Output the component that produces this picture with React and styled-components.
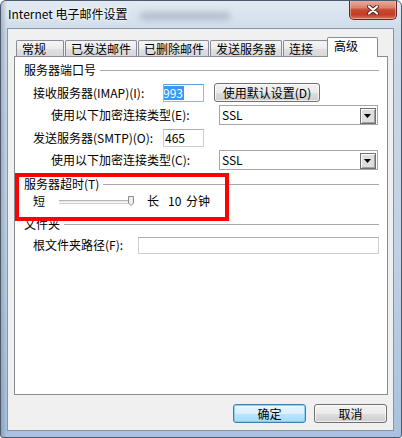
import styled, { createGlobalStyle } from 'styled-components';

const GlobalStyle = createGlobalStyle`
  html, body {
    margin: 0;
    padding: 0;
  }
  body {
    width: 402px;
    height: 438px;
    overflow: hidden;
    font-family: "Noto Sans CJK SC", "Liberation Sans", sans-serif;
    font-size: 12px;
    color: #000;
  }
  * {
    box-sizing: border-box;
  }
`;

const tabs = [
  { label: '常规', width: 48 },
  { label: '已发送邮件', width: 72 },
  { label: '已删除邮件', width: 71 },
  { label: '发送服务器', width: 72 },
  { label: '连接', width: 45 },
  { label: '高级', width: 51, active: true },
];

function CloseIcon() {
  return (
    <svg width="12" height="10" viewBox="0 0 12 10">
      <path d="M2 1.5 L10 8.5 M10 1.5 L2 8.5" stroke="#5b1f16" strokeWidth="4" strokeLinecap="round" />
      <path d="M2 1.5 L10 8.5 M10 1.5 L2 8.5" stroke="#fff" strokeWidth="2.2" strokeLinecap="round" />
    </svg>
  );
}

function Combo({ value }) {
  return (
    <Select>
      <SelectText>{value}</SelectText>
      <ArrowButton>
        <svg width="8" height="5" viewBox="0 0 8 5">
          <polygon points="0,0 7,0 3.5,4" fill="#000" />
        </svg>
      </ArrowButton>
    </Select>
  );
}

function Group({ title, top }) {
  return (
    <GroupHeader $top={top}>
      <span>{title}</span>
    </GroupHeader>
  );
}

export default function App() {
  return (
    <>
      <GlobalStyle />
      <Window>
        <TitleBar>
          <Title>Internet 电子邮件设置</Title>
          <GlassBlur />
          <CloseButton>
            <CloseIcon />
          </CloseButton>
        </TitleBar>
        <Client>
          <TabStrip>
            {tabs.map((t) => (
              <Tab key={t.label} $width={t.width} $active={t.active}>
                {t.label}
              </Tab>
            ))}
          </TabStrip>
          <Panel>
            <Group title="服务器端口号" top={6} />
            <Row $top={6} $height={19} $indent={9}>
              <Label $width={130}>接收服务器(IMAP)(I):</Label>
              <TextBox $width={41} $height={18} $focused>
                <Selected>993</Selected>
              </TextBox>
              <Button $width={106} $height={19} style={{ marginLeft: 10 }}>
                使用默认设置(D)
              </Button>
            </Row>
            <Row $top={3} $height={20} $indent={27}>
              <Label $width={168}>使用以下加密连接类型(E):</Label>
              <Combo value="SSL" />
            </Row>
            <Row $top={4} $height={18} $indent={9}>
              <Label $width={130}>发送服务器(SMTP)(O):</Label>
              <TextBox $width={41} $height={18}>465</TextBox>
            </Row>
            <Row $top={3} $height={20} $indent={27}>
              <Label $width={168}>使用以下加密连接类型(C):</Label>
              <Combo value="SSL" />
            </Row>

            <Group title="服务器超时(T)" top={7} />
            <Row $top={2} $height={16} $indent={9}>
              <Label $width={26}>短</Label>
              <Track>
                <Thumb>
                  <svg width="6" height="10" viewBox="0 0 6 10">
                    <path d="M0.5 0.5 H5.5 V7 L3 9.5 L0.5 7 Z" fill="#eeeeee" stroke="#8c8c8c" />
                  </svg>
                </Thumb>
              </Track>
              <Label $width={21} style={{ marginLeft: 14 }}>长</Label>
              <Label $width={18}>10</Label>
              <Label>分钟</Label>
            </Row>

            <Group title="文件夹" top={8} />
            <Row $top={5} $height={18} $indent={9}>
              <Label $width={105}>根文件夹路径(F):</Label>
              <TextBox $width={241} $height={17} />
            </Row>

            <Highlight />
          </Panel>
          <ButtonRow>
            <Button $width={73} $height={19} $default>确定</Button>
            <Button $width={73} $height={19}>取消</Button>
          </ButtonRow>
        </Client>
      </Window>
    </>
  );
}

const Window = styled.div`
  width: 402px;
  height: 438px;
  display: flex;
  flex-direction: column;
  border: 1px solid #4b5b6d;
  border-radius: 6px 6px 3px 3px;
  overflow: hidden;
  background:
    linear-gradient(90deg, rgba(90, 100, 115, 0.35) 0px, rgba(90, 100, 115, 0) 6px),
    linear-gradient(180deg, #e2eaf3 0%, #cbd9e9 8%, #c0d2e6 55%, #a8c2df 100%);
`;

const TitleBar = styled.div`
  position: relative;
  height: 27px;
  flex: none;
  display: flex;
  align-items: flex-start;
  padding: 0 4px 0 7px;
`;

const Title = styled.div`
  margin-top: 5px;
  line-height: 16px;
  font-size: 12px;
  white-space: nowrap;
  text-shadow: 0 0 6px #fff, 0 0 3px #fff;
`;

const GlassBlur = styled.div`
  width: 90px;
  height: 8px;
  margin: 11px 0 0 12px;
  border-radius: 4px;
  background: rgba(110, 120, 135, 0.35);
  filter: blur(3px);
`;

const CloseButton = styled.div`
  margin-left: auto;
  margin-top: -1px;
  width: 48px;
  height: 20px;
  border: 1px solid #5e2a22;
  border-top: none;
  border-radius: 0 0 5px 5px;
  display: flex;
  align-items: center;
  justify-content: center;
  background: linear-gradient(180deg, #eab0a3 0%, #d98370 40%, #c8472f 52%, #c33d28 78%, #d9765f 100%);
  box-shadow: inset 0 0 0 1px rgba(255, 220, 210, 0.45);
`;

const Client = styled.div`
  flex: 1;
  margin: 0 7px 6px 6px;
  background: #f0f0f0;
  border: 1px solid #8696a9;
  padding: 8px 5px 0 6px;
  display: flex;
  flex-direction: column;
`;

const TabStrip = styled.div`
  height: 19px;
  display: flex;
  align-items: flex-end;
  padding-left: 2px;
  gap: 1px;
`;

const Tab = styled.div`
  position: relative;
  width: ${(p) => p.$width}px;
  height: ${(p) => (p.$active ? 20 : 16)}px;
  margin-left: ${(p) => (p.$active ? -2 : 0)}px;
  margin-bottom: ${(p) => (p.$active ? -1 : 0)}px;
  z-index: ${(p) => (p.$active ? 1 : 0)};
  padding: 0 0 ${(p) => (p.$active ? 3 : 0)}px ${(p) => (p.$active ? 6 : 5)}px;
  display: flex;
  align-items: center;
  line-height: 14px;
  white-space: nowrap;
  border: 1px solid #898c95;
  border-bottom: none;
  border-radius: 2px 2px 0 0;
  background: ${(p) =>
    p.$active
      ? '#ffffff'
      : 'linear-gradient(180deg, #f4f4f4 0%, #ececec 50%, #e0e0e0 51%, #d8d8d8 100%)'};
`;

const Panel = styled.div`
  position: relative;
  height: 339px;
  background: #fff;
  border: 1px solid #898c95;
  padding: 0 8px 0 9px;
  display: flex;
  flex-direction: column;
`;

const GroupHeader = styled.div`
  margin-top: ${(p) => p.$top}px;
  height: 14px;
  display: flex;
  align-items: center;
  gap: 4px;
  line-height: 14px;
  white-space: nowrap;

  &::after {
    content: '';
    flex: 1;
    height: 1px;
    background: #a9a9a9;
  }
`;

const Row = styled.div`
  margin-top: ${(p) => p.$top}px;
  height: ${(p) => p.$height}px;
  padding-left: ${(p) => p.$indent}px;
  display: flex;
  align-items: center;
  line-height: 14px;
  white-space: nowrap;
`;

const Label = styled.span`
  flex: none;
  width: ${(p) => (p.$width ? `${p.$width}px` : 'auto')};
`;

const TextBox = styled.div`
  flex: none;
  width: ${(p) => p.$width}px;
  height: ${(p) => p.$height}px;
  padding-left: ${(p) => (p.$focused ? 0 : 1)}px;
  display: flex;
  align-items: center;
  background: #fff;
  border: 1px solid ${(p) => (p.$focused ? '#8fb8e2' : '#cdcfd4')};
  border-top-color: ${(p) => (p.$focused ? '#5f9ad8' : '#abadb3')};
  overflow: hidden;
`;

const Selected = styled.span`
  background: #3399ff;
  color: #fff;
  line-height: 14px;
  padding: 0 1px 0 0;
  margin-left: -1px;
`;

const Select = styled.div`
  flex: none;
  width: 159px;
  height: 20px;
  display: flex;
  align-items: center;
  background: #fff;
  border: 1px solid #a6a6a6;
  padding: 0 1px 0 2px;
`;

const SelectText = styled.span`
  flex: 1;
`;

const ArrowButton = styled.div`
  width: 16px;
  height: 16px;
  margin-top: 1px;
  display: flex;
  align-items: center;
  justify-content: center;
  padding-top: 1px;
  background: #dedede;
  border: 1px solid #6f6f6f;
  box-shadow: inset 1px 1px 0 #fff, inset -1px -1px 0 #a0a0a0;
`;

const Track = styled.div`
  position: relative;
  flex: none;
  width: 74px;
  height: 3px;
  background: #e6e6e6;
  border-top: 1px solid #b4b4b4;
  border-bottom: 1px solid #f8f8f8;
  box-shadow: 0 1px 0 #cfcfcf;
`;

const Thumb = styled.div`
  position: absolute;
  right: -1px;
  top: -5px;
  width: 6px;
  height: 10px;
  display: flex;
`;

const Highlight = styled.div`
  position: absolute;
  left: 0;
  top: 116px;
  width: 214px;
  height: 48px;
  border: 4px solid #ff0000;
  pointer-events: none;
`;

const ButtonRow = styled.div`
  margin-top: 9px;
  display: flex;
  justify-content: flex-end;
  gap: 8px;
  padding-right: 1px;
`;

const Button = styled.div`
  flex: none;
  width: ${(p) => p.$width}px;
  height: ${(p) => p.$height}px;
  display: flex;
  align-items: center;
  justify-content: center;
  line-height: 14px;
  white-space: nowrap;
  border: 1px solid ${(p) => (p.$default ? '#3c7fb1' : '#707070')};
  border-radius: 3px;
  background: ${(p) =>
    p.$default
      ? 'linear-gradient(180deg, #eaf6fd 0%, #d9f0fc 50%, #bee6fd 51%, #a7d9f5 100%)'
      : 'linear-gradient(180deg, #f2f2f2 0%, #ebebeb 50%, #dddddd 51%, #cfcfcf 100%)'};
  box-shadow: inset 0 0 0 1px ${(p) => (p.$default ? 'rgba(120, 200, 245, 0.8)' : 'rgba(255, 255, 255, 0.7)')};
`;
